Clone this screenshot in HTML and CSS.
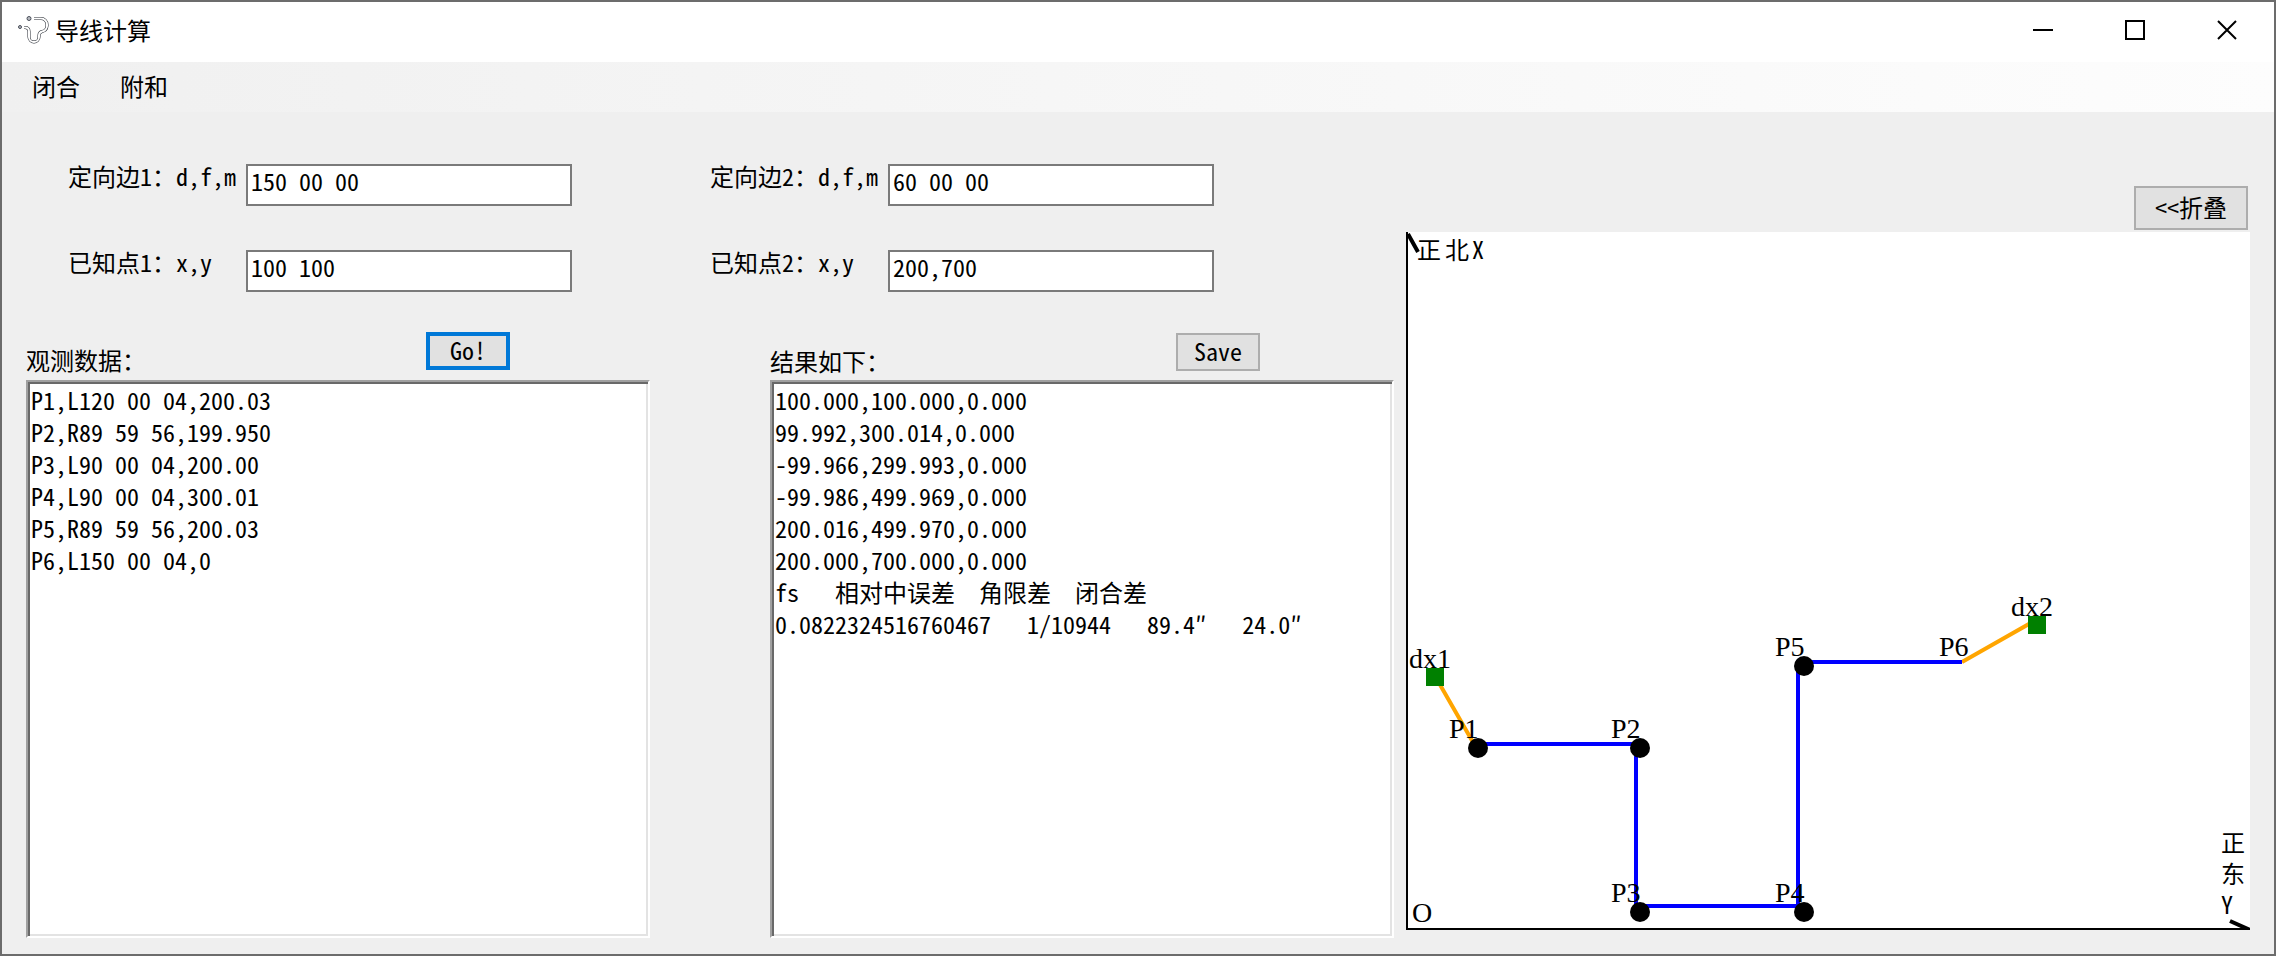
FILE: index.html
```html
<!DOCTYPE html>
<html lang="zh-CN">
<head>
<meta charset="utf-8">
<title>导线计算</title>
<link rel="stylesheet" href="styles.css">
</head>
<body>
<div class="window">
  <header class="titlebar">
    <svg class="app-icon" viewBox="0 0 32 32" aria-hidden="true">
      <path class="tube-outer" d="M17 4.500h7a6 6 0 0 1 6 6v1.500a6 6 0 0 1-5 5.500q-3 1-3 4v1.500a5 5 0 0 1-10 0v-5.500q0-4-4-4H7"/>
      <path class="tube-inner" d="M17 4.500h7a6 6 0 0 1 6 6v1.500a6 6 0 0 1-5 5.500q-3 1-3 4v1.500a5 5 0 0 1-10 0v-5.500q0-4-4-4H7"/>
      <circle class="node" cx="12" cy="4.500" r="2"/>
      <circle class="node" cx="3" cy="13" r="1.500"/>
    </svg>
    <h1 class="title">导线计算</h1>
    <div class="caption-buttons">
      <button type="button" class="caption" aria-label="最小化"><svg viewBox="0 0 20 20"><path d="M0 10h20"/></svg></button>
      <button type="button" class="caption" aria-label="最大化"><svg viewBox="0 0 20 20"><path d="M1 1h18v18H1z"/></svg></button>
      <button type="button" class="caption" aria-label="关闭"><svg viewBox="0 0 20 20"><path d="M1 1l18 18M19 1L1 19"/></svg></button>
    </div>
  </header>
  <nav class="menu">
    <button type="button" class="menu-item">闭合</button>
    <button type="button" class="menu-item">附和</button>
  </nav>
  <main class="content">
    <section class="work">
      <div class="fields">
        <div class="field"><label for="edge1">定向边1：d,f,m</label><input id="edge1" type="text" value="150 00 00"></div>
        <div class="field"><label for="edge2">定向边2：d,f,m</label><input id="edge2" type="text" value="60 00 00"></div>
        <div class="field"><label for="point1">已知点1：x,y</label><input id="point1" type="text" value="100 100"></div>
        <div class="field"><label for="point2">已知点2：x,y</label><input id="point2" type="text" value="200,700"></div>
      </div>
      <div class="panels">
        <div class="panel">
          <div class="panel-head head-data"><label for="data">观测数据：</label><button type="button" class="btn btn-default">Go!</button></div>
          <textarea id="data" class="memo" spellcheck="false">P1,L120 00 04,200.03
P2,R89 59 56,199.950
P3,L90 00 04,200.00
P4,L90 00 04,300.01
P5,R89 59 56,200.03
P6,L150 00 04,0</textarea>
        </div>
        <div class="panel">
          <div class="panel-head head-result"><label for="result">结果如下：</label><button type="button" class="btn">Save</button></div>
          <textarea id="result" class="memo" spellcheck="false">100.000,100.000,0.000
99.992,300.014,0.000
-99.966,299.993,0.000
-99.986,499.969,0.000
200.016,499.970,0.000
200.000,700.000,0.000
fs   相对中误差  角限差  闭合差
0.0822324516760467   1/10944   89.4″   24.0″</textarea>
        </div>
      </div>
    </section>
    <section class="plot">
      <button type="button" class="btn btn-fold">&lt;&lt;折叠</button>
      <div class="canvas">
        <svg viewBox="0 0 844 698" preserveAspectRatio="xMinYMax meet" role="img" aria-label="导线图">
          <path class="axis" d="M1 0V697H844"/>
          <path class="arrow" d="M2 2L12 20M824 689L844 698"/>
          <path class="bearing" d="M29 444L68 512M556 430L630 388"/>
          <path class="route" d="M68 512H230V674H392V430H556"/>
          <g class="station">
            <circle cx="72" cy="516" r="10"/>
            <circle cx="234" cy="516" r="10"/>
            <circle cx="234" cy="680" r="10"/>
            <circle cx="398" cy="680" r="10"/>
            <circle cx="398" cy="434" r="10"/>
          </g>
          <g class="control">
            <rect x="20" y="436" width="18" height="18"/>
            <rect x="622" y="384" width="18" height="18"/>
          </g>
          <g class="axis-names">
            <text x="11 39 66" y="27">正北X</text>
            <text x="815" y="620">正</text>
            <text x="815" y="651">东</text>
            <text x="815" y="682">Y</text>
          </g>
          <g class="names">
            <text x="6" y="690">O</text>
            <text x="3" y="436">dx1</text>
            <text x="43" y="506">P1</text>
            <text x="205" y="506">P2</text>
            <text x="205" y="670">P3</text>
            <text x="369" y="670">P4</text>
            <text x="369" y="424">P5</text>
            <text x="533" y="424">P6</text>
            <text x="605" y="384">dx2</text>
          </g>
        </svg>
      </div>
    </section>
  </main>
</div>
</body>
</html>
```
FILE: styles.css
```css
* { box-sizing: border-box; }

body {
  margin: 0;
  background: #efefef;
  color: #000;
  font: 24px/32px "Noto Sans Mono CJK SC", "Liberation Mono", "Noto Sans CJK SC", monospace;
}

button, input, textarea { font: inherit; color: inherit; }

.window {
  display: flex;
  flex-direction: column;
  min-height: 100vh;
  border: 2px solid #6c6c6c;
}

.titlebar {
  display: flex;
  align-items: center;
  height: 60px;
  padding: 0 1px 4px 15px;
  background: #fff;
}

.app-icon { width: 32px; height: 32px; }
.app-icon path { fill: none; }
.tube-outer { stroke: #20242c; stroke-width: 3; }
.tube-inner { stroke: #fff; stroke-width: 2; }
.node { fill: #b8bac0; stroke: #4a4f5a; }

.title {
  margin: 0 auto 0 6px;
  font: 24px/32px "Noto Sans CJK SC", sans-serif;
}

.caption-buttons { display: flex; align-self: stretch; }
.caption {
  display: grid;
  place-items: center;
  width: 92px;
  padding: 0;
  border: 0;
  background: none;
}
.caption svg { width: 20px; height: 20px; fill: none; stroke: #000; stroke-width: 2; }

.menu {
  display: flex;
  gap: 40px;
  height: 50px;
  padding: 0 30px 2px;
  background: linear-gradient(to right, #f0f0f0, #fdfdfd);
}
.menu-item {
  padding: 0;
  border: 0;
  background: none;
  font-family: "Noto Sans CJK SC", sans-serif;
}

.content {
  flex: 1;
  display: grid;
  grid-template-columns: 1368fr 844fr;
  gap: 12px;
  padding: 0 24px 16px;
}

.work {
  display: flex;
  flex-direction: column;
  gap: 40px;
  padding-top: 52px;
}

.fields {
  display: grid;
  grid-template-columns: 1fr 1fr;
  row-gap: 44px;
  padding: 0 42px;
}
.field { display: flex; align-items: flex-start; }
.field label { width: 178px; line-height: 24px; white-space: nowrap; }
.field input {
  width: 326px;
  height: 42px;
  padding: 0 3px 10px;
  border: 2px solid #7a7a7a;
  background: #fff;
  line-height: 28px;
}

.panels {
  flex: 1;
  display: grid;
  grid-template-columns: 1fr 1fr;
  gap: 120px;
}
.panel { display: flex; flex-direction: column; }
.panel-head {
  display: flex;
  justify-content: space-between;
  align-items: flex-start;
  height: 48px;
}
.panel-head label { padding-top: 12px; }
.head-data { padding-right: 140px; }
.head-result { padding-right: 134px; padding-top: 1px; }

.btn {
  width: 84px;
  height: 38px;
  padding: 0 0 2px;
  border: 2px solid #adadad;
  background: #e1e1e1;
  line-height: 32px;
}
.btn-default { border: 4px solid #0078d7; line-height: 28px; }

.memo {
  flex: 1;
  width: 100%;
  padding: 2px 4px 4px 3px;
  border: 2px solid;
  border-color: #a0a0a0 #fff #fff #a0a0a0;
  box-shadow: inset 2px 2px #696969, inset -2px -2px #e3e3e3;
  background: #fff;
  resize: none;
  outline: none;
}

.plot {
  display: flex;
  flex-direction: column;
  align-items: flex-end;
  gap: 2px;
  padding: 74px 0 8px;
}
.btn-fold { width: 114px; height: 44px; margin-right: 2px; }
.canvas { flex: 1; display: flex; width: 100%; background: #fff; }
.canvas svg { width: 100%; height: 100%; }

.axis, .arrow, .bearing, .route { fill: none; }
.axis { stroke: #000; stroke-width: 2; }
.arrow { stroke: #000; stroke-width: 4; }
.bearing { stroke: orange; stroke-width: 4; }
.route { stroke: #00f; stroke-width: 4; }
.control { fill: green; }
.names { font: 28px "Liberation Serif", serif; }
```
